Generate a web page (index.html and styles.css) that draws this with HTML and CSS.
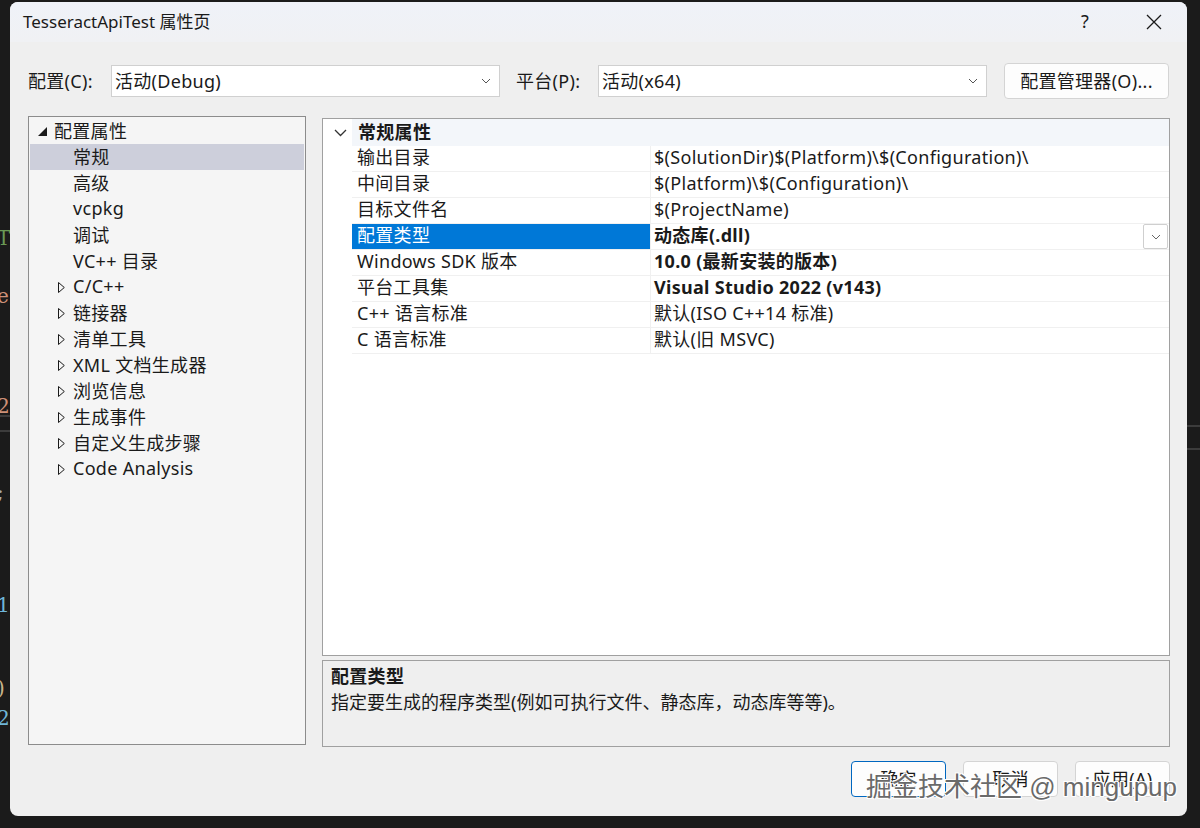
FILE: index.html
```html
<!DOCTYPE html>
<html lang="zh-CN">
<head>
    <meta charset="UTF-8">
    <title>TesseractApiTest 属性页</title>
    <link rel="stylesheet" href="styles.css">
</head>
<body>

    <!-- editor behind the dialog, mostly covered by it -->
    <div class="behind behind-left">
        <span class="code-bit c-green" style="top:226px">T</span>
        <span class="code-bit c-orange" style="top:284px">e</span>
        <span class="code-bit c-orange" style="top:394px">2</span>
        <span class="code-line" style="top:415px"></span>
        <span class="code-line" style="top:430px"></span>
        <span class="code-bit c-grey" style="top:480px">;</span>
        <span class="code-bit c-blue" style="top:593px">1</span>
        <span class="code-bit c-tan" style="top:676px">)</span>
        <span class="code-bit c-blue" style="top:706px">2</span>
    </div>
    <div class="behind behind-right">
        <span class="code-line" style="top:425px"></span>
        <span class="code-line" style="top:448px"></span>
    </div>

    <div class="dialog">
        <div class="titlebar">
            <span class="title">TesseractApiTest 属性页</span>
            <span class="help">?</span>
            <svg class="close" width="16" height="16" viewBox="0 0 16 16">
                <path d="M1 1 L15 15 M15 1 L1 15" stroke="#1a1a1a" stroke-width="1.3" fill="none"/>
            </svg>
        </div>

        <div class="config-row">
            <span class="label">配置(C):</span>
            <div class="combo combo-config">
                <span>活动(Debug)</span>
                <svg class="chev" width="10" height="6" viewBox="0 0 10 6"><path d="M1 1 L5 5 L9 1" stroke="#555" stroke-width="1" fill="none"/></svg>
            </div>
            <span class="label label-platform">平台(P):</span>
            <div class="combo combo-platform">
                <span>活动(x64)</span>
                <svg class="chev" width="10" height="6" viewBox="0 0 10 6"><path d="M1 1 L5 5 L9 1" stroke="#555" stroke-width="1" fill="none"/></svg>
            </div>
            <button class="btn btn-manager">配置管理器(O)...</button>
        </div>

        <div class="main">
            <div class="tree">
                <div class="tree-item root">
                    <svg class="arrow-open" width="9" height="9" viewBox="0 0 9 9"><polygon points="9,0 9,9 0,9" fill="#1a1a1a"/></svg>
                    <span>配置属性</span>
                </div>
                <div class="tree-item leaf selected"><span>常规</span></div>
                <div class="tree-item leaf"><span>高级</span></div>
                <div class="tree-item leaf"><span>vcpkg</span></div>
                <div class="tree-item leaf"><span>调试</span></div>
                <div class="tree-item leaf"><span>VC++ 目录</span></div>
                <div class="tree-item branch"><svg class="arrow-closed" width="7" height="11" viewBox="0 0 7 11"><polygon points="0.5,0.5 6.3,5.5 0.5,10.5" fill="none" stroke="#1a1a1a" stroke-width="1"/></svg><span>C/C++</span></div>
                <div class="tree-item branch"><svg class="arrow-closed" width="7" height="11" viewBox="0 0 7 11"><polygon points="0.5,0.5 6.3,5.5 0.5,10.5" fill="none" stroke="#1a1a1a" stroke-width="1"/></svg><span>链接器</span></div>
                <div class="tree-item branch"><svg class="arrow-closed" width="7" height="11" viewBox="0 0 7 11"><polygon points="0.5,0.5 6.3,5.5 0.5,10.5" fill="none" stroke="#1a1a1a" stroke-width="1"/></svg><span>清单工具</span></div>
                <div class="tree-item branch"><svg class="arrow-closed" width="7" height="11" viewBox="0 0 7 11"><polygon points="0.5,0.5 6.3,5.5 0.5,10.5" fill="none" stroke="#1a1a1a" stroke-width="1"/></svg><span>XML 文档生成器</span></div>
                <div class="tree-item branch"><svg class="arrow-closed" width="7" height="11" viewBox="0 0 7 11"><polygon points="0.5,0.5 6.3,5.5 0.5,10.5" fill="none" stroke="#1a1a1a" stroke-width="1"/></svg><span>浏览信息</span></div>
                <div class="tree-item branch"><svg class="arrow-closed" width="7" height="11" viewBox="0 0 7 11"><polygon points="0.5,0.5 6.3,5.5 0.5,10.5" fill="none" stroke="#1a1a1a" stroke-width="1"/></svg><span>生成事件</span></div>
                <div class="tree-item branch"><svg class="arrow-closed" width="7" height="11" viewBox="0 0 7 11"><polygon points="0.5,0.5 6.3,5.5 0.5,10.5" fill="none" stroke="#1a1a1a" stroke-width="1"/></svg><span>自定义生成步骤</span></div>
                <div class="tree-item branch"><svg class="arrow-closed" width="7" height="11" viewBox="0 0 7 11"><polygon points="0.5,0.5 6.3,5.5 0.5,10.5" fill="none" stroke="#1a1a1a" stroke-width="1"/></svg><span>Code Analysis</span></div>
            </div>

            <div class="right-col">
                <div class="grid">
                    <div class="grid-header">
                        <svg class="group-chev" width="13" height="8" viewBox="0 0 13 8"><path d="M1 1 L6.5 6.5 L12 1" stroke="#333" stroke-width="1.3" fill="none"/></svg>
                        <span>常规属性</span>
                    </div>
                    <div class="prop">
                        <div class="prop-name">输出目录</div>
                        <div class="prop-value">$(SolutionDir)$(Platform)\$(Configuration)\</div>
                    </div>
                    <div class="prop">
                        <div class="prop-name">中间目录</div>
                        <div class="prop-value">$(Platform)\$(Configuration)\</div>
                    </div>
                    <div class="prop">
                        <div class="prop-name">目标文件名</div>
                        <div class="prop-value">$(ProjectName)</div>
                    </div>
                    <div class="prop active">
                        <div class="prop-name">配置类型</div>
                        <div class="prop-value bold">
                            <span>动态库(.dll)</span>
                            <span class="drop-btn">
                                <svg width="10" height="6" viewBox="0 0 10 6"><path d="M1 1 L5 5 L9 1" stroke="#666" stroke-width="1" fill="none"/></svg>
                            </span>
                        </div>
                    </div>
                    <div class="prop">
                        <div class="prop-name">Windows SDK 版本</div>
                        <div class="prop-value bold">10.0 (最新安装的版本)</div>
                    </div>
                    <div class="prop">
                        <div class="prop-name">平台工具集</div>
                        <div class="prop-value bold">Visual Studio 2022 (v143)</div>
                    </div>
                    <div class="prop">
                        <div class="prop-name">C++ 语言标准</div>
                        <div class="prop-value">默认(ISO C++14 标准)</div>
                    </div>
                    <div class="prop">
                        <div class="prop-name">C 语言标准</div>
                        <div class="prop-value">默认(旧 MSVC)</div>
                    </div>
                </div>

                <div class="desc">
                    <div class="desc-title">配置类型</div>
                    <div class="desc-text">指定要生成的程序类型(例如可执行文件、静态库，动态库等等)。</div>
                </div>
            </div>
        </div>

        <div class="buttons">
            <button class="btn btn-default">确定</button>
            <button class="btn">取消</button>
            <button class="btn">应用(A)</button>
        </div>

        <div class="watermark">掘金技术社区 @ mingupup</div>
    </div>

</body>
</html>
```

FILE: styles.css
```css
* {
    box-sizing: border-box;
}
body {
    margin: 0;
    width: 1200px;
    height: 828px;
    overflow: hidden;
    background-color: #1b1b1b;
    font-family: "Noto Sans", "Noto Sans CJK SC", sans-serif;
    font-size: 18px;
    letter-spacing: 0.3px;
    color: #1a1a1a;
    position: relative;
}

/* IDE text behind the dialog */
.behind {
    position: absolute;
    top: 0;
    height: 828px;
}
.behind-left {
    left: 0;
    width: 40px;
}
.behind-right {
    right: 0;
    width: 13px;
}
.code-bit {
    position: absolute;
    left: -3px;
    font-family: "DejaVu Serif", serif;
    font-size: 20px;
    line-height: 24px;
    white-space: nowrap;
}
.c-green { color: #6a9955; }
.c-orange { color: #ce9178; }
.c-blue { color: #6fb6d8; }
.c-tan { color: #c8b48a; }
.c-grey { color: #aaa; }
.code-line {
    position: absolute;
    left: 0;
    right: 0;
    height: 2px;
    background-color: #3c3c3c;
}

.dialog {
    position: absolute;
    left: 10px;
    top: 2px;
    width: 1177px;
    height: 814px;
    background-color: #efefef;
    border-radius: 8px;
    display: flex;
    flex-direction: column;
    overflow: hidden;
}

.titlebar {
    height: 40px;
    display: flex;
    align-items: center;
    padding-left: 13px;
    padding-bottom: 3px;
    background: linear-gradient(#eff2f8, #f0f1f4);
}
.title {
    flex: 1;
    font-size: 17px;
    letter-spacing: 0;
}
.help {
    font-size: 18px;
    margin-right: 57px;
}
.close {
    margin-right: 25px;
    margin-top: 2px;
}

.config-row {
    display: flex;
    align-items: center;
    margin-top: 21px;
    padding-left: 18px;
    height: 36px;
}
.label {
    width: 83px;
    padding-bottom: 3px;
}
.label-platform {
    margin-left: 16px;
    width: 82px;
}
.combo {
    height: 32px;
    background-color: #fff;
    border: 1px solid #d0d0d0;
    display: flex;
    align-items: center;
    justify-content: space-between;
    padding: 0 8px 3px 3px;
}
.combo-config {
    width: 389px;
}
.combo-platform {
    width: 389px;
}
.chev {
    display: block;
    margin-top: 3px;
}
.btn {
    font-family: inherit;
    font-size: 18px;
    letter-spacing: 0.3px;
    color: #1a1a1a;
    background-color: #fdfdfd;
    border: 1px solid #d4d4d4;
    border-radius: 4px;
    height: 36px;
    width: 95px;
    padding: 0 0 3px 0;
}
.btn-manager {
    margin-left: 17px;
    width: 165px;
}

.main {
    display: flex;
    margin-top: 17px;
    padding-left: 18px;
}

.tree {
    width: 278px;
    height: 629px;
    background-color: #f5f5f5;
    border: 1px solid #8c8c8c;
    padding: 1px 1px 0 1px;
}
.tree-item {
    height: 26px;
    display: flex;
    align-items: center;
    padding-bottom: 3px;
}
.tree-item.root {
    padding-left: 8px;
}
.tree-item.root span {
    margin-left: 7px;
}
.arrow-open {
    display: block;
    margin-top: 3px;
}
.arrow-closed {
    margin-top: 3px;
}
.tree-item.leaf {
    padding-left: 43px;
}
.tree-item.branch {
    padding-left: 28px;
}
.tree-item.branch span {
    margin-left: 8px;
}
.tree-item.selected {
    background-color: #cdcfdb;
}

.right-col {
    margin-left: 16px;
    width: 848px;
    display: flex;
    flex-direction: column;
    gap: 4px;
    padding-top: 2px;
}

.grid {
    height: 538px;
    background-color: #fff;
    border: 1px solid #a0a0a0;
}
.grid-header {
    height: 27px;
    display: flex;
    align-items: center;
    padding-bottom: 3px;
    font-weight: bold;
    background: linear-gradient(90deg, #fff 29px, #f3f6fa 29px);
}
.group-chev {
    margin-left: 11px;
    margin-right: 11px;
    margin-top: 3px;
}
.prop {
    height: 26px;
    display: flex;
    margin-left: 29px;
    border-bottom: 1px solid #f0f0f0;
}
.prop-name {
    width: 299px;
    padding-left: 5px;
    line-height: 22px;
    border-right: 1px solid #f0f0f0;
    white-space: nowrap;
}
.prop-value {
    flex: 1;
    padding-left: 3px;
    line-height: 22px;
    display: flex;
    justify-content: space-between;
    white-space: nowrap;
}
.prop-value.bold {
    font-weight: bold;
}
.prop.active .prop-name {
    background-color: #0078d7;
    color: #fff;
}
.drop-btn {
    width: 25px;
    height: 25px;
    border: 1px solid #cfcfcf;
    border-radius: 2px;
    display: flex;
    align-items: center;
    justify-content: center;
    margin-right: 1px;
}

.desc {
    height: 87px;
    border: 1px solid #a0a0a0;
    background-color: #efefef;
    padding: 2px 8px;
}
.desc-title {
    font-weight: bold;
    line-height: 26px;
}
.desc-text {
    line-height: 26px;
    letter-spacing: 0;
}

.buttons {
    display: flex;
    justify-content: flex-end;
    gap: 17px;
    margin-top: 14px;
    padding-right: 17px;
}
.btn-default {
    border: 1px solid #0067c0;
}

/* site stamp over the lower right corner */
.watermark {
    position: absolute;
    left: 856px;
    top: 764px;
    font-family: "Liberation Sans", "Noto Sans CJK SC", sans-serif;
    font-size: 26px;
    letter-spacing: 0;
    white-space: nowrap;
    color: #6a6a6a;
    text-shadow: -1px -1px 0 #fff, 1px -1px 0 #fff, -1px 1px 0 #fff, 1px 1px 0 #fff;
}
```
